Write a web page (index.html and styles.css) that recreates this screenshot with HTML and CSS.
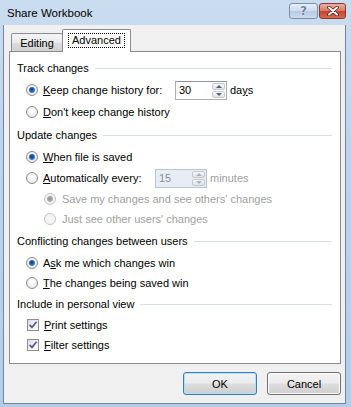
FILE: index.html
```html
<!DOCTYPE html>
<html lang="en">
<head>
    <meta charset="UTF-8">
    <title>Share Workbook</title>
    <link rel="stylesheet" href="styles.css">
</head>
<body>

    <div class="window">
        <!-- Title bar -->
        <div class="titlebar">
            <span class="title">Share Workbook</span>
            <div class="caption-buttons">
                <div class="cap help">?</div>
                <div class="cap close">
                    <svg width="14" height="10" viewBox="0 0 14 10">
                        <path d="M3 1.5 L11 8.5 M11 1.5 L3 8.5" stroke="#5a1c12" stroke-width="3.6" stroke-linecap="round"/>
                        <path d="M3 1.5 L11 8.5 M11 1.5 L3 8.5" stroke="#ffffff" stroke-width="2" stroke-linecap="round"/>
                    </svg>
                </div>
            </div>
        </div>

        <div class="frame">
            <div class="client">
                <div class="tabs">
                    <div class="tab">Editing</div>
                    <div class="tab active"><span class="focus">Advanced</span></div>
                </div>

                <div class="panel">
                    <div class="group">
                        <div class="group-title">Track changes</div>
                        <div class="opt tall">
                            <span class="radio on"></span>
                            <span class="lbl lbl-keep"><u>K</u>eep change history for:</span>
                            <div class="spinbox">
                                <span class="val">30</span>
                                <div class="spin">
                                    <span class="arr"><i class="up"></i></span>
                                    <span class="arr"><i class="down"></i></span>
                                </div>
                            </div>
                            <span class="unit">da<u>y</u>s</span>
                        </div>
                        <div class="opt">
                            <span class="radio"></span>
                            <span class="lbl"><u>D</u>on't keep change history</span>
                        </div>
                    </div>

                    <div class="group">
                        <div class="group-title">Update changes</div>
                        <div class="opt">
                            <span class="radio on"></span>
                            <span class="lbl"><u>W</u>hen file is saved</span>
                        </div>
                        <div class="opt tall">
                            <span class="radio"></span>
                            <span class="lbl lbl-auto"><u>A</u>utomatically every:</span>
                            <div class="spinbox disabled">
                                <span class="val">15</span>
                                <div class="spin">
                                    <span class="arr"><i class="up"></i></span>
                                    <span class="arr"><i class="down"></i></span>
                                </div>
                            </div>
                            <span class="unit muted">minutes</span>
                        </div>
                        <div class="opt sub short">
                            <span class="radio on off"></span>
                            <span class="lbl muted">Save my changes and see others' changes</span>
                        </div>
                        <div class="opt sub short">
                            <span class="radio off"></span>
                            <span class="lbl muted">Just see other users' changes</span>
                        </div>
                    </div>

                    <div class="group">
                        <div class="group-title">Conflicting changes between users</div>
                        <div class="opt">
                            <span class="radio on"></span>
                            <span class="lbl">A<u>s</u>k me which changes win</span>
                        </div>
                        <div class="opt short">
                            <span class="radio"></span>
                            <span class="lbl"><u>T</u>he changes being saved win</span>
                        </div>
                    </div>

                    <div class="group last">
                        <div class="group-title">Include in personal view</div>
                        <div class="opt check short">
                            <span class="checkbox">
                                <svg width="10" height="10" viewBox="0 0 10 10"><path d="M1.6 4.8 L4 7.4 L8.6 1.8" fill="none" stroke="#4a5f94" stroke-width="1.7"/></svg>
                            </span>
                            <span class="lbl"><u>P</u>rint settings</span>
                        </div>
                        <div class="opt check tight">
                            <span class="checkbox">
                                <svg width="10" height="10" viewBox="0 0 10 10"><path d="M1.6 4.8 L4 7.4 L8.6 1.8" fill="none" stroke="#4a5f94" stroke-width="1.7"/></svg>
                            </span>
                            <span class="lbl"><u>F</u>ilter settings</span>
                        </div>
                    </div>
                </div>

                <div class="buttons">
                    <button class="btn default">OK</button>
                    <button class="btn">Cancel</button>
                </div>
            </div>
        </div>
    </div>

</body>
</html>
```

FILE: styles.css
```css
/* Reset */
* {
    margin: 0;
    padding: 0;
    box-sizing: border-box;
}

body {
    font-family: 'Liberation Sans', Tahoma, sans-serif;
    font-size: 11px;
    color: #000;
    background: #ffffff;
}

u {
    text-decoration: underline;
    text-underline-offset: 1px;
}

/* Window frame */
.window {
    width: 351px;
    height: 407px;
    display: flex;
    flex-direction: column;
    background: linear-gradient(180deg, #cadcef 0%, #bdd3eb 40%, #b4cde8 100%);
}

.titlebar {
    height: 25px;
    flex: none;
    display: flex;
    align-items: flex-start;
    justify-content: space-between;
    padding: 3px 5px 0 7px;
}

.title {
    font-size: 11.5px;
    line-height: 21px;
    color: #000;
}

.caption-buttons {
    display: flex;
    gap: 1px;
}

.cap {
    height: 16px;
    border-radius: 3px;
    display: flex;
    align-items: center;
    justify-content: center;
}

.help {
    width: 29px;
    border: 1px solid #7a91b0;
    background: linear-gradient(180deg, #e6eef8 0%, #cfdced 48%, #b6cbe4 52%, #c9dbef 100%);
    font-family: 'DejaVu Sans', sans-serif;
    font-weight: bold;
    font-size: 12px;
    color: #6b84a6;
    text-shadow: 0 0 1px #ffffff, 0 0 1px #ffffff;
}

.close {
    width: 27px;
    border: 1px solid #8b3b2d;
    background: linear-gradient(180deg, #eab1a4 0%, #d97a66 48%, #c4452e 52%, #d66a50 100%);
}

.frame {
    flex: 1;
    display: flex;
    padding: 0 5px 3px 3px;
}

.client {
    flex: 1;
    display: flex;
    flex-direction: column;
    background: #f0f0f0;
    border: 1px solid #6f87a5;
    border-top: none;
}

/* Tabs */
.tabs {
    height: 26px;
    flex: none;
    display: flex;
    align-items: flex-end;
    padding-left: 7px;
}

.tab {
    height: 18px;
    width: 52px;
    border: 1px solid #898c95;
    border-bottom: none;
    border-radius: 2px 2px 0 0;
    background: linear-gradient(180deg, #f4f4f4 0%, #ebebeb 50%, #dddddd 51%, #d2d2d2 100%);
    display: flex;
    align-items: center;
    justify-content: center;
}

.tab.active {
    position: relative;
    z-index: 1;
    width: 69px;
    height: 23px;
    margin-left: -1px;
    margin-bottom: -1px;
    background: #ffffff;
    padding-bottom: 2px;
}

.focus {
    border: 1px dotted #000;
    padding: 0 3px;
    line-height: 13px;
}

/* Tab panel */
.panel {
    height: 313px;
    flex: none;
    margin: 0 4px 0 5px;
    background: #ffffff;
    border: 1px solid #898c95;
    padding: 5px 8px 0 7px;
}

.group + .group {
    margin-top: 1px;
}

.group:nth-child(2) {
    margin-top: 2px;
}

.group.last {
    margin-top: 0;
}

.group-title {
    height: 22px;
    display: flex;
    align-items: center;
    gap: 6px;
}

.group-title::after {
    content: '';
    flex: 1;
    height: 1px;
    background: #d8dee5;
}

.opt {
    height: 21px;
    display: flex;
    align-items: center;
    padding-left: 9px;
}

.opt.tall { height: 22px; }
.opt.short { height: 20px; }
.opt.tight { height: 19px; }
.opt.sub { padding-left: 27px; }
.opt.check { padding-left: 10px; }

.lbl {
    margin-left: 5px;
    white-space: nowrap;
}

.opt.sub .lbl { margin-left: 6px; }

.lbl-keep { width: 132px; }
.lbl-auto { width: 112px; }

.muted { color: #a0a0a0; }

/* Radio buttons */
.radio {
    flex: none;
    width: 12px;
    height: 12px;
    border-radius: 50%;
    border: 1px solid #8a8d8f;
    background: radial-gradient(circle at 50% 40%, #ffffff 15%, #e4e4e4 85%);
    display: flex;
    align-items: center;
    justify-content: center;
}

.radio.on::after {
    content: '';
    width: 6px;
    height: 6px;
    border-radius: 50%;
    background: radial-gradient(circle at 45% 40%, #0f3d78 0%, #2a6bbf 50%, #78b6ee 100%);
}

.radio.off {
    border-color: #c3c3c3;
    background: #f4f4f4;
}

.radio.on.off::after {
    background: radial-gradient(circle at 45% 40%, #8f8f8f 0%, #b4b4b4 70%, #d0d0d0 100%);
}

/* Checkboxes */
.checkbox {
    flex: none;
    width: 12px;
    height: 12px;
    border: 1px solid #8e8f8f;
    background: linear-gradient(135deg, #dcdcdc 0%, #f6f6f6 60%, #ffffff 100%);
    display: flex;
    align-items: center;
    justify-content: center;
}

/* Spin box */
.spinbox {
    width: 52px;
    height: 19px;
    border: 1px solid #abadb3;
    border-top-color: #8e95a0;
    background: #ffffff;
    display: flex;
    align-items: stretch;
}

.spinbox .val {
    flex: 1;
    padding-left: 3px;
    line-height: 17px;
}

.spinbox.disabled {
    background: #e7edf5;
    border-color: #b8c4d4;
}

.spinbox.disabled .val {
    color: #8d8d8d;
}

.spin {
    width: 15px;
    display: flex;
    flex-direction: column;
    padding: 1px;
    gap: 1px;
}

.arr {
    flex: 1;
    border: 1px solid #c4c9d1;
    border-radius: 2px;
    background: linear-gradient(180deg, #f8f8f8 0%, #e2e2e2 100%);
    display: flex;
    align-items: center;
    justify-content: center;
}

.arr i {
    width: 0;
    height: 0;
    border-left: 3px solid transparent;
    border-right: 3px solid transparent;
}

.arr .up { border-bottom: 3px solid #4c607f; }
.arr .down { border-top: 3px solid #4c607f; }

.spinbox.disabled .arr .up { border-bottom-color: #a9b3c1; }
.spinbox.disabled .arr .down { border-top-color: #a9b3c1; }

.unit {
    margin-left: 3px;
}

/* Dialog buttons */
.buttons {
    flex: 1;
    display: flex;
    justify-content: flex-end;
    align-items: flex-start;
    gap: 10px;
    padding: 8px 4px 0 0;
}

.btn {
    font-family: 'Liberation Sans', Tahoma, sans-serif;
    font-size: 11px;
    color: #000;
    width: 74px;
    height: 23px;
    border: 1px solid #707070;
    border-radius: 3px;
    background: linear-gradient(180deg, #f3f3f3 0%, #ebebeb 48%, #dddddd 52%, #cfcfcf 100%);
    box-shadow: inset 0 0 0 1px #fbfbfb;
}

.btn.default {
    border-color: #3c7fb1;
    box-shadow: inset 0 0 0 1px #aee0f9;
}
```
